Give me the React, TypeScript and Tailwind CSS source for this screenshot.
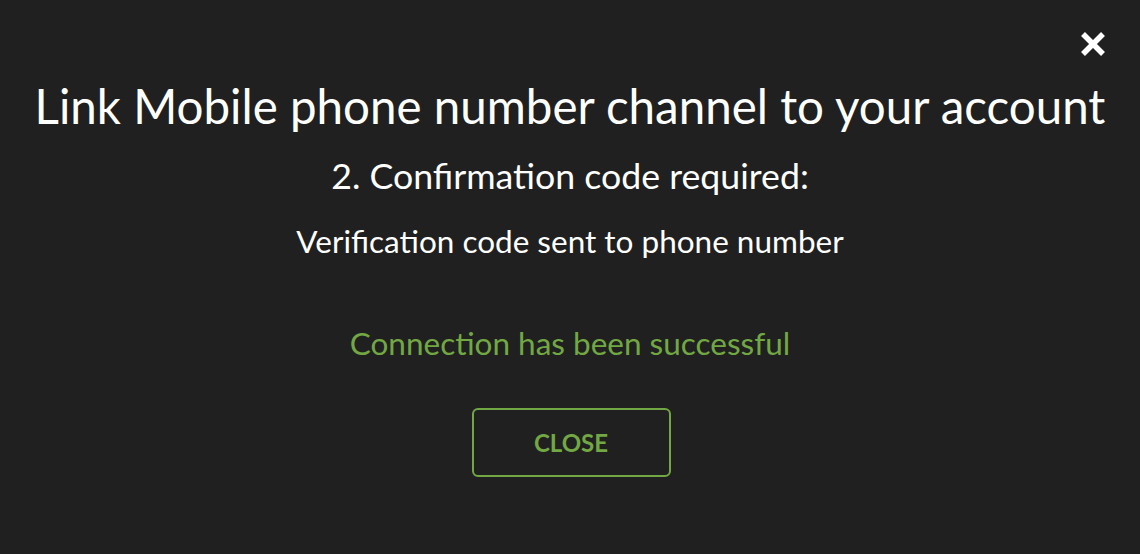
import React from "react";

export default function App() {
  return (
    <div className="w-[1140px] h-[554px] bg-[#202020] relative flex flex-col items-center text-white" style={{ fontFamily: "Lato, 'Noto Sans', sans-serif" }}>
      <button className="absolute right-[33px] top-[30px] w-[28px] h-[28px] flex items-center justify-center">
        <svg width="28" height="28" viewBox="0 0 28 28">
          <path d="M4 4 L24 24 M24 4 L4 24" stroke="#ffffff" strokeWidth="5.5" strokeLinecap="butt" />
        </svg>
      </button>
      <h1 className="mt-[80px] text-[47.5px] leading-[52px] font-normal whitespace-nowrap">Link Mobile phone number channel to your account</h1>
      <h2 className="mt-[24px] text-[35.7px] leading-[40px]">{"2. Confirma\u200Ction code required:"}</h2>
      <p className="mt-[28px] text-[31.5px] leading-[34px]">{"Verifica\u200Ction code sent to phone number"}</p>
      <p className="mt-[67px] text-[31.5px] leading-[36px] text-[#72a843]">{"Connec\u200Ction has been successful"}</p>
      <button className="mt-[47px] ml-[2px] w-[199px] h-[69px] border-2 border-[#72a843] rounded-[6px] text-[#72a843] text-[24px] font-bold">CLOSE</button>
    </div>
  );
}
